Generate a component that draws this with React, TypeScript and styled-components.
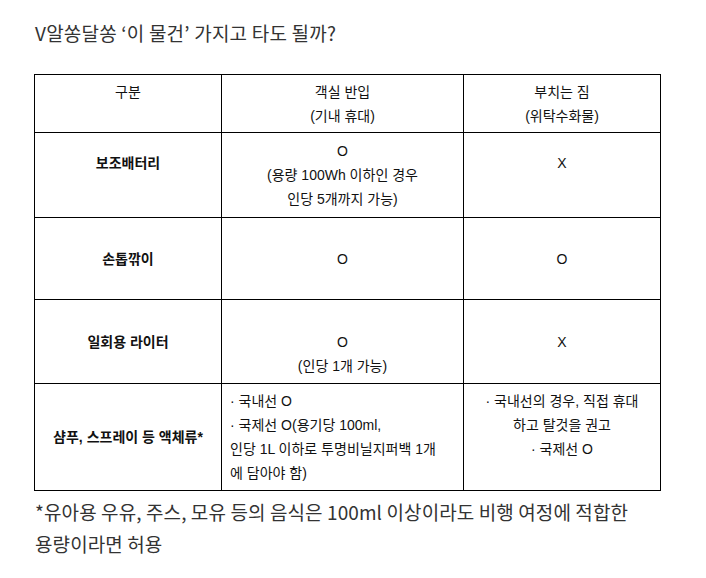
import React from "react";
import { styled, createGlobalStyle } from "styled-components";

type TCell = {
  lines: string[];
  bold?: boolean;
  align?: "left" | "center";
};

type TRow = {
  height: number;
  cells: TCell[];
};

const rows: TRow[] = [
  {
    height: 85,
    cells: [
      { lines: ["보조배터리", ""], bold: true },
      { lines: ["O", "(용량 100Wh 이하인 경우", "인당 5개까지 가능)"] },
      { lines: ["X", ""] },
    ],
  },
  {
    height: 82,
    cells: [{ lines: ["손톱깎이"], bold: true }, { lines: ["O"] }, { lines: ["O"] }],
  },
  {
    height: 84,
    cells: [
      { lines: ["일회용 라이터"], bold: true },
      { lines: ["", "O", "(인당 1개 가능)"] },
      { lines: ["X"] },
    ],
  },
  {
    height: 107,
    cells: [
      { lines: ["샴푸, 스프레이 등 액체류*"], bold: true },
      {
        lines: [
          "· 국내선 O",
          "· 국제선 O(용기당 100ml,",
          "인당 1L 이하로 투명비닐지퍼백 1개",
          "에 담아야 함)",
        ],
        align: "left",
      },
      { lines: ["· 국내선의 경우, 직접 휴대", "하고 탈것을 권고", "· 국제선 O", ""] },
    ],
  },
];

const App = () => {
  return (
    <>
      <GlobalStyle />
      <Page>
        <Title>V알쏭달쏭 ‘이 물건’ 가지고 타도 될까?</Title>
        <TableElement>
          <colgroup>
            <col style={{ width: 187 }} />
            <col style={{ width: 242 }} />
            <col style={{ width: 197 }} />
          </colgroup>
          <thead>
            <tr>
              <ThElement $height={58}>
                <Line>구분</Line>
                <Line>&nbsp;</Line>
              </ThElement>
              <ThElement $height={58}>
                <Line>객실 반입</Line>
                <Line>(기내 휴대)</Line>
              </ThElement>
              <ThElement $height={58}>
                <Line>부치는 짐</Line>
                <Line>(위탁수화물)</Line>
              </ThElement>
            </tr>
          </thead>
          <tbody>
            {rows.map((row, i) => (
              <tr key={i}>
                {row.cells.map((cell, j) => (
                  <TdElement
                    key={j}
                    $height={row.height}
                    $bold={cell.bold}
                    $align={cell.align ?? "center"}
                  >
                    {cell.lines.map((line, k) => (
                      <Line key={k}>{line || "\u00a0"}</Line>
                    ))}
                  </TdElement>
                ))}
              </tr>
            ))}
          </tbody>
        </TableElement>
        <Note>
          *유아용 우유, 주스, 모유 등의 음식은 100ml 이상이라도 비행 여정에 적합한
          <br />
          용량이라면 허용
        </Note>
      </Page>
    </>
  );
};

export default App;

const GlobalStyle = createGlobalStyle`
  html, body {
    margin: 0;
    padding: 0;
    background: #ffffff;
  }
`;

const Page = styled.div`
  width: 706px;
  height: 578px;
  padding: 20px 0 0 34px;
  box-sizing: border-box;
  font-family: "Noto Sans CJK KR", "Noto Sans", sans-serif;
  color: #333333;
`;

const Title = styled.h2`
  margin: 0 0 28px 1px;
  font-size: 19px;
  font-weight: 400;
  line-height: 26px;
  letter-spacing: 0.2px;
  color: #333333;
`;

const TableElement = styled.table`
  width: 627px;
  border-collapse: collapse;
  table-layout: fixed;
  font-family: "Liberation Sans", "Noto Sans CJK KR", sans-serif;
  font-size: 14px;
  color: #111111;
`;

const ThElement = styled.th<{ $height: number }>`
  height: ${(p) => p.$height}px;
  padding: 0 8px;
  border: 1px solid #000000;
  font-weight: 400;
  text-align: center;
  vertical-align: middle;
  box-sizing: border-box;
`;

const TdElement = styled.td<{ $height: number; $bold?: boolean; $align: string }>`
  height: ${(p) => p.$height}px;
  padding: 0 8px;
  border: 1px solid #000000;
  font-weight: ${(p) => (p.$bold ? 700 : 400)};
  text-align: ${(p) => p.$align};
  vertical-align: middle;
  box-sizing: border-box;
`;

const Line = styled.div`
  line-height: 24px;
  white-space: nowrap;
`;

const Note = styled.p`
  margin: 5px 0 0 1px;
  font-size: 19px;
  line-height: 32px;
  letter-spacing: 0.1px;
  color: #333333;
`;
